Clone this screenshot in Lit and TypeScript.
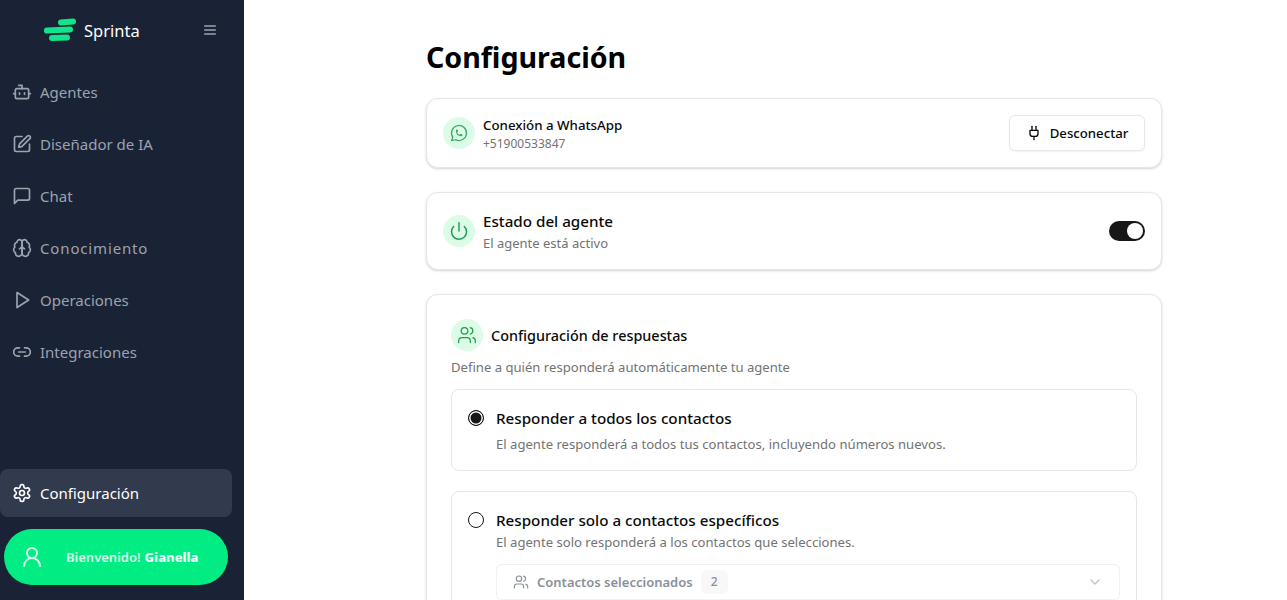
import { LitElement, html, css, svg } from "lit";
import { customElement } from "lit/decorators.js";
import { classMap } from "lit/directives/class-map.js";

const ic = (body: unknown, cls = "ic") => html`<svg class=${cls} viewBox="0 0 24 24" fill="none" stroke="currentColor" stroke-width="2" stroke-linecap="round" stroke-linejoin="round">${body}</svg>`;

const icons = {
  bot: svg`<path d="M12 8V4H8"/><rect x="4" y="8" width="16" height="12" rx="2"/><path d="M2 14h2"/><path d="M20 14h2"/><path d="M15 13v2"/><path d="M9 13v2"/>`,
  pen: svg`<path d="M12 3H5a2 2 0 0 0-2 2v14a2 2 0 0 0 2 2h14a2 2 0 0 0 2-2v-7"/><path d="M18.375 2.625a1 1 0 0 1 3 3l-9.013 9.014a2 2 0 0 1-.853.505l-2.873.84a.5.5 0 0 1-.62-.62l.84-2.873a2 2 0 0 1 .506-.852z"/>`,
  chat: svg`<path d="M21 15a2 2 0 0 1-2 2H7l-4 4V5a2 2 0 0 1 2-2h14a2 2 0 0 1 2 2z"/>`,
  brain: svg`<path d="M12 5a3 3 0 1 0-5.997.125 4 4 0 0 0-2.526 5.77 4 4 0 0 0 .556 6.588A4 4 0 1 0 12 18Z"/><path d="M12 5a3 3 0 1 1 5.997.125 4 4 0 0 1 2.526 5.77 4 4 0 0 1-.556 6.588A4 4 0 1 1 12 18Z"/><path d="M15 13a4.5 4.5 0 0 1-3-4 4.5 4.5 0 0 1-3 4"/><path d="M12 5v13"/>`,
  play: svg`<polygon points="6 3 20 12 6 21 6 3"/>`,
  link: svg`<path d="M9 17H7A5 5 0 0 1 7 7h2"/><path d="M15 7h2a5 5 0 1 1 0 10h-2"/><line x1="8" y1="12" x2="16" y2="12"/>`,
  gear: svg`<path d="M12.22 2h-.44a2 2 0 0 0-2 2v.18a2 2 0 0 1-1 1.73l-.43.25a2 2 0 0 1-2 0l-.15-.08a2 2 0 0 0-2.73.73l-.22.38a2 2 0 0 0 .73 2.73l.15.1a2 2 0 0 1 1 1.72v.51a2 2 0 0 1-1 1.74l-.15.09a2 2 0 0 0-.73 2.73l.22.38a2 2 0 0 0 2.73.73l.15-.08a2 2 0 0 1 2 0l.43.25a2 2 0 0 1 1 1.73V20a2 2 0 0 0 2 2h.44a2 2 0 0 0 2-2v-.18a2 2 0 0 1 1-1.73l.43-.25a2 2 0 0 1 2 0l.15.08a2 2 0 0 0 2.73-.73l.22-.39a2 2 0 0 0-.73-2.73l-.15-.08a2 2 0 0 1-1-1.74v-.5a2 2 0 0 1 1-1.74l.15-.09a2 2 0 0 0 .73-2.73l-.22-.38a2 2 0 0 0-2.73-.73l-.15.08a2 2 0 0 1-2 0l-.43-.25a2 2 0 0 1-1-1.73V4a2 2 0 0 0-2-2z"/><circle cx="12" cy="12" r="3"/>`,
  user: svg`<circle cx="12" cy="8" r="5"/><path d="M20 21a8 8 0 0 0-16 0"/>`,
  users: svg`<path d="M16 21v-2a4 4 0 0 0-4-4H6a4 4 0 0 0-4 4v2"/><circle cx="9" cy="7" r="4"/><path d="M22 21v-2a4 4 0 0 0-3-3.87"/><path d="M16 3.13a4 4 0 0 1 0 7.75"/>`,
  plug: svg`<path d="M12 22v-5"/><path d="M9 8V2"/><path d="M15 8V2"/><path d="M18 8v5a4 4 0 0 1-4 4h-4a4 4 0 0 1-4-4V8Z"/>`,
  power: svg`<path d="M12 2v10"/><path d="M18.4 6.6a9 9 0 1 1-12.77.04"/>`,
  whatsapp: svg`<path d="M3 21l1.65-3.8a9 9 0 1 1 3.4 2.9L3 21"/><path d="M9 10a.5.5 0 0 0 1 0V9a.5.5 0 0 0-1 0v1a5 5 0 0 0 5 5h1a.5.5 0 0 0 0-1h-1a.5.5 0 0 0 0 1"/>`,
  menu: svg`<path d="M4 6h16M4 12h16M4 18h16"/>`,
  chev: svg`<path d="m6 9 6 6 6-6"/>`,
};

const nav: { label: string; icon: unknown; wide?: boolean }[] = [
  { label: "Agentes", icon: icons.bot },
  { label: "Diseñador de IA", icon: icons.pen },
  { label: "Chat", icon: icons.chat },
  { label: "Conocimiento", icon: icons.brain, wide: true },
  { label: "Operaciones", icon: icons.play },
  { label: "Integraciones", icon: icons.link },
];

@customElement("app-root")
export class AppRoot extends LitElement {
  static styles = css`
    :host { display: flex; height: 100vh; overflow: hidden; background: #fff; color: #0a0a0a; font-family: "Noto Sans", Inter, sans-serif; }
    * { box-sizing: border-box; }
    .ic { width: 20px; height: 20px; flex: none; display: block; }
    .side { width: 244px; flex: none; background: #1a2236; color: #9ca3af; display: flex; flex-direction: column; padding-bottom: 15px; }
    .brand { height: 60px; display: flex; align-items: center; padding-left: 44px; margin-bottom: 8px; }
    .logo { width: 33px; height: 24px; flex: none; }
    .brand-name { color: #fff; font-size: 16.5px; margin-left: 7px; }
    .burger { width: 16px; height: 16px; margin-left: auto; margin-right: 26px; color: #9ca3af; }
    .nav { display: flex; flex-direction: column; gap: 4px; flex: 1; margin-right: 12px; }
    .item { height: 48px; display: flex; align-items: center; gap: 8px; padding-left: 12px; font-size: 15px; border-radius: 0 8px 8px 0; }
    .item.wide span { letter-spacing: .85px; }
    .item.active { margin-top: auto; background: #323a4d; color: #fff; border-radius: 8px; }
    .pill { margin: 12px 16px 0 4px; height: 56px; border-radius: 28px; background: #02ec84; color: #d8fbea; display: flex; align-items: center; padding-left: 16px; font-size: 13px; font-weight: 600; }
    .pill .ic { width: 24px; height: 24px; margin-right: 22px; }
    .pill b { font-weight: 800; color: #eafff5; margin-left: 4px; }
    .main { flex: 1; padding: 39px 125px 0 182px; }
    h1 { margin: 0 0 23px; font-size: 28.6px; line-height: 36px; font-weight: 700; color: #000; }
    .card { background: #fff; border: 1px solid #e5e7eb; border-radius: 12px; box-shadow: 0 1px 3px rgba(0,0,0,.12), 0 1px 2px rgba(0,0,0,.06); margin-bottom: 24px; }
    .row { display: flex; align-items: center; padding: 0 16px; gap: 8px; }
    .wa { height: 70px; }
    .state { height: 78px; }
    .badge { width: 32px; height: 32px; border-radius: 50%; background: #dcfce7; color: #16a34a; display: flex; align-items: center; justify-content: center; flex: none; }
    .badge .ic { width: 20px; height: 20px; stroke-width: 1.5; }
    .wa .badge { color: #3ca56c; }
    .state .badge { color: #1f9d55; }
    .state .badge .ic { stroke-width: 1.75; }
    .text { flex: 1; min-width: 0; }
    .t1 { font-size: 13.3px; line-height: 20px; font-weight: 500; }
    .t2 { font-size: 12px; line-height: 16px; color: #737373; margin-top: 1px; }
    .btn { height: 36px; width: 136px; border: 1px solid #e5e7eb; border-radius: 6px; background: #fff; display: flex; align-items: center; justify-content: center; gap: 8px; font-size: 13.2px; font-weight: 500; box-shadow: 0 1px 2px rgba(0,0,0,.05); }
    .btn .ic { width: 16px; height: 16px; }
    .state .t1 { font-size: 15.2px; line-height: 24px; margin-top: -1px; }
    .state .t2 { font-size: 13px; line-height: 18px; margin-top: 1px; }
    .toggle { width: 36px; height: 20px; background: #171717; border-radius: 10px; padding: 2px; display: flex; justify-content: flex-end; }
    .toggle i { width: 16px; height: 16px; border-radius: 50%; background: #fff; display: block; }
    .resp { padding: 24px; height: 500px; }
    .resp-h { display: flex; align-items: center; gap: 8px; }
    .resp-h span { font-size: 14.4px; font-weight: 500; }
    .resp-d { font-size: 13.1px; line-height: 20px; color: #737373; margin-top: 6px; margin-bottom: 12px; }
    .opt { border: 1px solid #e5e7eb; border-radius: 8px; padding: 16px; display: grid; grid-template-columns: 16px 1fr; column-gap: 12px; margin-bottom: 20px; }
    .opt.one { height: 82px; }
    .radio { width: 16px; height: 16px; border-radius: 50%; border: 1.5px solid #171717; margin-top: 4px; }
    .radio.on { background: #171717; box-shadow: inset 0 0 0 1.5px #fff; }
    .o1 { font-size: 15.2px; line-height: 24px; font-weight: 500; }
    .o2 { font-size: 13.1px; line-height: 18px; color: #737373; margin-top: 5px; }
    .opt.two .o2 { margin-top: 1px; }
    .select { grid-column: 2; margin-top: 13px; height: 36px; border: 1px solid #f0f1f3; border-radius: 6px; display: flex; align-items: center; padding: 0 16px; gap: 8px; color: #8a8f99; font-size: 13px; font-weight: 600; }
    .select .ic { width: 16px; height: 16px; stroke-width: 1.75; }
    .select .chev { margin-left: auto; color: #bfc2c7; stroke-width: 2; }
    .count { background: #f8f8f9; border-radius: 6px; padding: 0 10px; line-height: 24px; font-size: 12px; font-weight: 500; }
  `;

  render() {
    return html`
      <aside class="side">
        <div class="brand">
          <svg class="logo" viewBox="0 0 33 24" fill="none" stroke="#10e58a" stroke-width="6" stroke-linecap="round">
            <path d="M17 4.5 L 29 3.5"/><path d="M3 12.5 L 26 11.5"/><path d="M8 20 L 23 19.5"/>
          </svg>
          <span class="brand-name">Sprinta</span>
          ${ic(icons.menu, "ic burger")}
        </div>
        <nav class="nav">
          ${nav.map((n) => html`<div class=${classMap({ item: true, wide: !!n.wide })}>${ic(n.icon)}<span>${n.label}</span></div>`)}
          <div class="item active">${ic(icons.gear)}<span>Configuración</span></div>
        </nav>
        <div class="pill">${ic(icons.user)}<span>Bienvenido!</span><b>Gianella</b></div>
      </aside>
      <main class="main">
        <h1>Configuración</h1>
        <section class="card row wa">
          <div class="badge">${ic(icons.whatsapp)}</div>
          <div class="text"><div class="t1">Conexión a WhatsApp</div><div class="t2">+51900533847</div></div>
          <div class="btn">${ic(icons.plug)}<span>Desconectar</span></div>
        </section>
        <section class="card row state">
          <div class="badge">${ic(icons.power)}</div>
          <div class="text"><div class="t1">Estado del agente</div><div class="t2">El agente está activo</div></div>
          <div class="toggle"><i></i></div>
        </section>
        <section class="card resp">
          <div class="resp-h"><div class="badge">${ic(icons.users)}</div><span>Configuración de respuestas</span></div>
          <div class="resp-d">Define a quién responderá automáticamente tu agente</div>
          <div class="opt one">
            <div class="radio on"></div>
            <div><div class="o1">Responder a todos los contactos</div><div class="o2">El agente responderá a todos tus contactos, incluyendo números nuevos.</div></div>
          </div>
          <div class="opt two">
            <div class="radio"></div>
            <div><div class="o1">Responder solo a contactos específicos</div><div class="o2">El agente solo responderá a los contactos que selecciones.</div></div>
            <div class="select">${ic(icons.users)}<span>Contactos seleccionados</span><span class="count">2</span>${ic(icons.chev, "ic chev")}</div>
          </div>
        </section>
      </main>
    `;
  }
}
